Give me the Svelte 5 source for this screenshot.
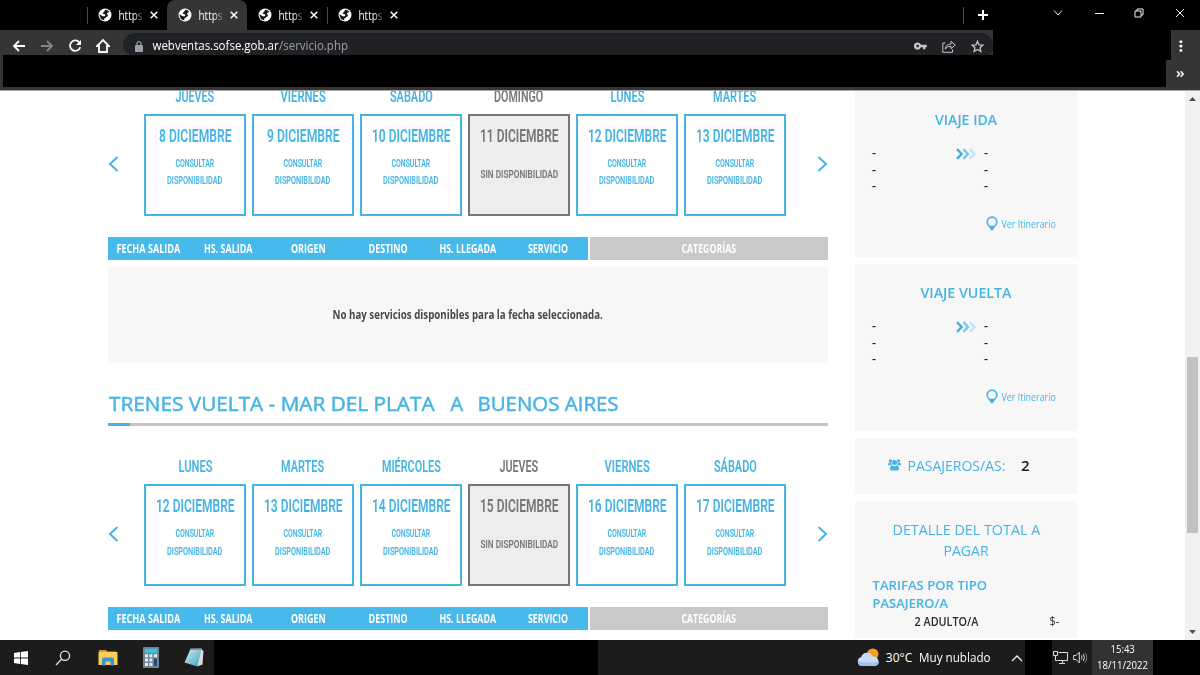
<script lang="ts">
  type Day = { name: string; date: string; nameW: number; dateW: number; off?: boolean };

  const idaDays: Day[] = [
    { name: "JUEVES", date: "8 DICIEMBRE", nameW: 39, dateW: 73 },
    { name: "VIERNES", date: "9 DICIEMBRE", nameW: 45, dateW: 73 },
    { name: "SÁBADO", date: "10 DICIEMBRE", nameW: 43, dateW: 79 },
    { name: "DOMINGO", date: "11 DICIEMBRE", nameW: 49, dateW: 79, off: true },
    { name: "LUNES", date: "12 DICIEMBRE", nameW: 34, dateW: 79 },
    { name: "MARTES", date: "13 DICIEMBRE", nameW: 43, dateW: 79 },
  ];
  const vueltaDays: Day[] = [
    { name: "LUNES", date: "12 DICIEMBRE", nameW: 34, dateW: 79 },
    { name: "MARTES", date: "13 DICIEMBRE", nameW: 43, dateW: 79 },
    { name: "MIÉRCOLES", date: "14 DICIEMBRE", nameW: 59, dateW: 79 },
    { name: "JUEVES", date: "15 DICIEMBRE", nameW: 39, dateW: 79, off: true },
    { name: "VIERNES", date: "16 DICIEMBRE", nameW: 45, dateW: 79 },
    { name: "SÁBADO", date: "17 DICIEMBRE", nameW: 43, dateW: 79 },
  ];
  const columns = [
    { text: "FECHA SALIDA", w: 64 },
    { text: "HS. SALIDA", w: 48 },
    { text: "ORIGEN", w: 35 },
    { text: "DESTINO", w: 39 },
    { text: "HS. LLEGADA", w: 57 },
    { text: "SERVICIO", w: 40 },
  ];
  const tabs = [0, 1, 2, 3];

  function fit(node: HTMLElement, width: number) {
    node.style.transform = `scaleX(${width / node.offsetWidth})`;
  }
</script>

{#snippet label(text: string, width: number)}
  <span class="label" style="width: {width}px"><span class="label-text" use:fit={width}>{text}</span></span>
{/snippet}

{#snippet dates(days: Day[])}
  <div class="dates">
    <svg class="arrow" width="12" height="18" viewBox="0 0 12 18"><path d="M9.5 2 L2 9 L9.5 16" /></svg>
    <div class="days">
      {#each days as day}
        <div class="day" class:off={day.off}>
          <div class="day-name">{@render label(day.name, day.nameW)}</div>
          <div class="card">
            <div class="card-date">{@render label(day.date, day.dateW)}</div>
            {#if day.off}
              <div class="none">{@render label("SIN DISPONIBILIDAD", 78)}</div>
            {:else}
              <div class="ask">{@render label("CONSULTAR", 39)}</div>
              <div class="ask">{@render label("DISPONIBILIDAD", 55)}</div>
            {/if}
          </div>
        </div>
      {/each}
    </div>
    <svg class="arrow" width="12" height="18" viewBox="0 0 12 18"><path d="M2.5 2 L10 9 L2.5 16" /></svg>
  </div>
{/snippet}

{#snippet tableHead()}
  <div class="thead">
    <div class="cols">
      {#each columns as col}
        <div>{@render label(col.text, col.w)}</div>
      {/each}
    </div>
    <div class="cats">{@render label("CATEGORÍAS", 55)}</div>
  </div>
{/snippet}

{#snippet trip(title: string, width: number)}
  <section class="box trip">
    <h3>{@render label(title, width)}</h3>
    <div class="legs">
      <div class="leg"><span>-</span><span>-</span><span>-</span></div>
      <svg width="20" height="12" viewBox="0 0 20 12" fill="none" stroke-width="2.4">
        <path d="M1 1.2 L5.6 6 L1 10.8" stroke="#42afe3" />
        <path d="M7.4 1.2 L12 6 L7.4 10.8" stroke="#79c9ee" />
        <path d="M13.8 1.2 L18.4 6 L13.8 10.8" stroke="#bfe5f7" />
      </svg>
      <div class="leg"><span>-</span><span>-</span><span>-</span></div>
    </div>
    <div class="itinerary">
      <svg width="12" height="15" viewBox="0 0 12 15">
        <path fill="#45b4e4" fill-rule="evenodd" d="M6 0.3 A5.6 5.6 0 0 1 11.6 5.9 C11.6 9 8.5 10.8 7.2 13.6 Q6 15.4 4.8 13.6 C3.5 10.8 0.4 9 0.4 5.9 A5.6 5.6 0 0 1 6 0.3 Z M6 2 A3.9 3.9 0 1 0 6 9.8 A3.9 3.9 0 1 0 6 2 Z" />
      </svg>
      {@render label("Ver Itinerario", 54)}
    </div>
  </section>
{/snippet}

<div class="screen">
  <header class="browser">
    <div class="tabs">
      {#each tabs as tab}
        <div class="tab" class:active={tab === 1} class:line={tab === 0 || tab === 3}>
          <svg width="14" height="14" viewBox="0 0 14 14">
            <circle cx="7" cy="7" r="6.5" fill="#fff" />
            <path fill="#17181a" d="M7.6 1.7 C6.2 2.4 6.8 3.6 5.6 4.3 C4.4 5 4.5 5.8 5.7 6 C7.2 6.1 7.6 6.7 7.2 7.7 L6.8 8.2 H4.7 L1.6 6.2 A5.3 5.3 0 0 0 6.2 12.2 V11 C6.2 10.2 7.3 10.3 7.8 9.6 C8.4 8.8 9.8 8.8 10 7.8 C10.2 6.8 9.2 6.8 9 5.9 C8.8 5 10 5.1 10.5 4.2 L11 3.5 A5.3 5.3 0 0 0 7.6 1.7 Z" />
          </svg>
          <span class="tab-title">{@render label("https", 24)}</span>
          <svg class="close" width="8" height="8" viewBox="0 0 8 8"><path d="M0.7 0.7 L7.3 7.3 M7.3 0.7 L0.7 7.3" /></svg>
        </div>
      {/each}
      <div class="new-tab">
        <svg width="12" height="12" viewBox="0 0 12 12"><path d="M6 1 V11 M1 6 H11" stroke="#fff" stroke-width="2" /></svg>
      </div>
      <div class="window-buttons">
        <svg width="10" height="10" viewBox="0 0 10 10"><path d="M1 2.5 L5 7 L9 2.5" /></svg>
        <svg width="10" height="10" viewBox="0 0 10 10"><path d="M1 5.5 H10" /></svg>
        <svg width="10" height="10" viewBox="0 0 10 10"><path d="M1 3 H7 V9 H1 Z M3 3 V1 H9 V7 H7" /></svg>
        <svg width="10" height="10" viewBox="0 0 10 10"><path d="M1 1 L9 9 M9 1 L1 9" /></svg>
      </div>
    </div>
    <div class="toolbar">
      <div class="nav">
        <svg width="14" height="14" viewBox="0 0 14 14"><path d="M13 7 H2 M7 2 L2 7 L7 12" /></svg>
        <svg class="dim" width="14" height="14" viewBox="0 0 14 14"><path d="M1 7 H12 M7 2 L12 7 L7 12" /></svg>
        <svg width="14" height="14" viewBox="0 0 14 14"><path d="M11.6 3.8 A5.2 5.2 0 1 0 12.2 8.2" /><path d="M13 1 V6 H8 Z" fill="#fff" stroke="none" /></svg>
        <svg width="14" height="16" viewBox="0 0 14 16"><path d="M3 14 V8 H1 L7 2 L13 8 H11 V14 Z" /></svg>
      </div>
      <div class="address">
        <svg width="8" height="11" viewBox="0 0 8 11"><rect y="4" width="8" height="7" rx="1" fill="#9aa0a6" /><path d="M2 4 V2.6 A2 2 0 0 1 6 2.6 V4" fill="none" stroke="#9aa0a6" stroke-width="1.2" /></svg>
        <span class="url">{@render label("webventas.sofse.gob.ar", 126)}<span class="path">{@render label("/servicio.php", 69)}</span></span>
        <div class="actions">
          <svg width="13" height="8" viewBox="0 0 13 8"><path fill="#c4c7cb" fill-rule="evenodd" d="M3.6 0.4 A3.6 3.6 0 1 0 6.9 5.3 H9 V7.3 H11.4 V5.3 H12.7 V2.7 H6.9 A3.6 3.6 0 0 0 3.6 0.4 Z M3.6 2.7 A1.3 1.3 0 1 1 3.6 5.3 A1.3 1.3 0 1 1 3.6 2.7 Z" /></svg>
          <svg width="14" height="13" viewBox="0 0 14 13"><path fill="none" stroke="#c4c7cb" d="M3.5 3 H0.8 V12.3 H10.5 V9.5 M3.2 9 Q4 4 9 4 V1.2 L13.2 5 L9 8.6 V6.2 Q5.5 6 3.2 9 Z" /></svg>
          <svg width="13" height="13" viewBox="0 0 13 13"><path fill="none" stroke="#c4c7cb" stroke-width="1.3" d="M6.5 1.2 L8 4.8 L12 5.1 L9 7.7 L9.9 11.5 L6.5 9.5 L3.1 11.5 L4 7.7 L1 5.1 L5 4.8 Z" /></svg>
        </div>
      </div>
      <div class="menu">
        <svg width="4" height="14" viewBox="0 0 4 14" fill="#fff"><rect x="0.5" y="1.4" width="2.8" height="2.6" rx="0.8" /><rect x="0.5" y="5.8" width="2.8" height="2.6" rx="0.8" /><rect x="0.5" y="10.2" width="2.8" height="2.6" rx="0.8" /></svg>
      </div>
    </div>
    <div class="bookmarks">
      <div class="more">
        <svg width="8" height="8" viewBox="0 0 8 8"><path d="M1 1.2 L3.6 4 L1 6.8 M4.6 1.2 L7.2 4 L4.6 6.8" fill="none" stroke="#fff" stroke-width="1.5" /></svg>
      </div>
    </div>
  </header>

  <div class="page">
    <main>
      <div class="first">{@render dates(idaDays)}</div>
      {@render tableHead()}
      <div class="empty">{@render label("No hay servicios disponibles para la fecha seleccionada.", 270)}</div>
      <h2>
        {@render label("TRENES VUELTA - MAR DEL PLATA", 326)}
        {@render label("A", 13)}
        {@render label("BUENOS AIRES", 141)}
      </h2>
      <div class="rule"><div></div></div>
      {@render dates(vueltaDays)}
      {@render tableHead()}
    </main>

    <aside>
      {@render trip("VIAJE IDA", 62)}
      {@render trip("VIAJE VUELTA", 91)}
      <section class="box passengers">
        <svg width="13" height="12" viewBox="0 0 13 12" fill="#45b4e4">
          <circle cx="2.5" cy="2" r="1.7" /><circle cx="10.5" cy="2" r="1.7" /><circle cx="6.5" cy="3.6" r="2.5" />
          <path d="M0 6.2 V5.4 Q0 4 1.2 4 H3.3 Q3.4 5.4 4.2 6.2 Z M13 6.2 V5.4 Q13 4 11.8 4 H9.7 Q9.6 5.4 8.8 6.2 Z M2 9.8 Q2 6.6 4.2 6.4 Q6.5 8 8.8 6.4 Q11 6.6 11 9.8 Q11 11.6 9.4 11.6 H3.6 Q2 11.6 2 9.8 Z" />
        </svg>
        {@render label("PASAJEROS/AS:", 98)}
        <b>2</b>
      </section>
      <section class="box total">
        <h4>{@render label("DETALLE DEL TOTAL A", 148)}<br />{@render label("PAGAR", 45)}</h4>
        <h5>{@render label("TARIFAS POR TIPO", 115)}<br />{@render label("PASAJERO/A", 76)}</h5>
        <div class="fare">
          {@render label("2 ADULTO/A", 64)}
          <span class="price">{@render label("$-", 10)}</span>
        </div>
      </section>
    </aside>

    <div class="scrollbar">
      <svg width="7" height="4" viewBox="0 0 7 4"><path d="M0 4 L3.5 0 L7 4 Z" fill="#505050" /></svg>
      <div class="thumb"></div>
      <svg width="7" height="4" viewBox="0 0 7 4"><path d="M0 0 L3.5 4 L7 0 Z" fill="#505050" /></svg>
    </div>
  </div>

  <footer class="taskbar">
    <div class="apps">
      <svg width="14" height="14" viewBox="0 0 14 14" fill="#fff"><path d="M0 2 L6 1.1 V6.6 H0 Z M6.8 1 L14 0 V6.6 H6.8 Z M0 7.4 H6 V12.9 L0 12 Z M6.8 7.4 H14 V14 L6.8 13 Z" /></svg>
      <svg width="16" height="16" viewBox="0 0 16 16" fill="none" stroke="#e4e4e4" stroke-width="1.3"><circle cx="10" cy="5.7" r="4.6" /><path d="M6.6 9.2 L1 15" /></svg>
      <svg width="20" height="17" viewBox="0 0 20 17">
        <path d="M1 1 H8 L9.5 2.5 H18 V6 H1 Z" fill="#e8961e" /><rect x="0.5" y="3" width="19" height="13" rx="0.6" fill="#fbcf55" />
        <path d="M4 16.5 V10 Q4 8.5 5.5 8.5 H14.5 Q16 8.5 16 10 V16.5 H12.5 V12.5 H7.5 V16.5 Z" fill="#3b93d8" />
      </svg>
      <svg width="16" height="21" viewBox="0 0 16 21">
        <rect width="16" height="21" rx="0.8" fill="#748493" /><rect x="2" y="1.8" width="12" height="4" fill="#32c6ee" />
        <path d="M2 7.3 H5 V10.3 H2 Z M6.4 7.3 H9.4 V10.3 H6.4 Z M10.9 7.3 H14 V10.3 H10.9 Z M2 11.6 H5 V14.6 H2 Z M6.4 11.6 H9.4 V14.6 H6.4 Z M2 16 H5 V19 H2 Z M6.4 16 H9.4 V19 H6.4 Z" fill="#e2eaf0" />
        <rect x="10.9" y="11.6" width="3.1" height="7.4" fill="#174f87" />
      </svg>
      <svg width="20" height="19" viewBox="0 0 20 19">
        <defs><linearGradient id="note" x1="0" y1="0" x2="1" y2="1"><stop offset="0" stop-color="#d8f1f6" /><stop offset="1" stop-color="#3c9fba" /></linearGradient></defs>
        <path d="M17 1 L19.5 3 L18.5 16.5 L13 18.5 Z" fill="#e0ddd7" /><path d="M6.5 1 L17.5 0.5 L13.5 18.5 L0.5 14.5 Z" fill="url(#note)" /><path d="M6 1.2 H17.5" stroke="#8a9598" stroke-width="1.5" />
      </svg>
    </div>
    <div class="weather">
      <svg width="23" height="19" viewBox="0 0 23 19">
        <circle cx="15.7" cy="6.2" r="5.8" fill="#f4a024" />
        <path d="M5 18 A4.6 4.6 0 0 1 4.2 9 A6 6 0 0 1 15.6 8.6 A4.7 4.7 0 1 1 17.5 18 Z" fill="#c9dcfa" />
        <path d="M5 18 A4.6 4.6 0 0 1 0.8 13.4 Q11 16 22.2 13.4 A4.7 4.7 0 0 1 17.5 18 Z" fill="#9fbff0" />
      </svg>
      {@render label("30°C", 26)}
      {@render label("Muy nublado", 72)}
      <svg width="12" height="8" viewBox="0 0 12 8" fill="none" stroke="#eee" stroke-width="1.3"><path d="M1 7 L6 2 L11 7" /></svg>
    </div>
    <div class="tray">
      <svg width="15" height="13" viewBox="0 0 15 13" fill="none" stroke="#ddd"><path d="M5.5 1.5 H14.5 V9.5 H4.5 M6 12.5 H12 M9.5 9.5 V12.5 M0.5 0.5 H4.5 V4.5 H0.5 Z M2.5 4.5 V9.5 H4.5" /></svg>
      <svg width="15" height="13" viewBox="0 0 15 13" fill="none" stroke="#ddd"><path d="M0.6 4.5 H3 L6.3 1.2 V11.8 L3 8.5 H0.6 Z M8.4 4.5 Q9.8 6.5 8.4 8.5 M10.3 3 Q12.6 6.5 10.3 10" /><path d="M12.2 1.5 Q15.4 6.5 12.2 11.5" stroke="#777" /></svg>
    </div>
    <div class="clock">
      {@render label("15:43", 24)}
      {@render label("18/11/2022", 51)}
    </div>
  </footer>
</div>

<style>
  :global(body) {
    background: #000;
    overflow: hidden;
  }
  .screen {
    width: 1200px;
    height: 675px;
    display: grid;
    grid-template-rows: 91px 549px 35px;
    background: #000;
    font-family: "Open Sans", "Noto Sans", sans-serif;
  }
  svg {
    display: block;
    flex: none;
  }
  h2, h3, h4, h5 {
    margin: 0;
    font-weight: inherit;
  }
  .label {
    display: inline-flex;
    justify-content: center;
    flex: none;
    vertical-align: top;
  }
  .label-text {
    flex: none;
    white-space: nowrap;
  }

  /* browser chrome */
  .browser {
    display: grid;
    grid-template-rows: 30px 25px 32px 3px;
    box-sizing: border-box;
    background: #353535;
    border-bottom: 1px solid #a9a9a9;
    color: #fff;
  }
  .tabs {
    display: flex;
    padding-left: 87px;
    background: #000;
  }
  .tab {
    display: flex;
    align-items: center;
    width: 80px;
    box-sizing: border-box;
    padding-left: 11px;
    font-size: 12px;
  }
  .tab.line {
    background: linear-gradient(#4a4a4a, #4a4a4a) 0 7px / 1px 17px no-repeat;
  }
  .tab.active {
    background: #353535;
    border-radius: 8px 8px 0 0;
  }
  .tab-title {
    width: 24px;
    margin: 0 7px 0 6.5px;
    mask-image: linear-gradient(90deg, #000 60%, rgba(0, 0, 0, 0.2) 100%);
  }
  .close {
    fill: none;
    stroke: #fff;
    stroke-width: 1.5;
  }
  .new-tab {
    display: flex;
    align-items: center;
    margin-left: 556px;
    padding-left: 14px;
    width: 60px;
    background: linear-gradient(#4a4a4a, #4a4a4a) 0 7px / 1px 17px no-repeat;
  }
  .window-buttons {
    display: flex;
    align-items: center;
    gap: 30.5px;
    margin-left: 16px;
    height: 25px;
    fill: none;
    stroke: #eee;
  }
  .toolbar {
    display: grid;
    grid-template-columns: 123px 870px 178px 29px;
    background: linear-gradient(#000, #000) 993px 0 / 178px 25px no-repeat;
  }
  .nav {
    display: flex;
    gap: 14px;
    padding: 1px 0 0 12px;
    align-items: center;
    height: 30px;
    fill: none;
    stroke: #fff;
    stroke-width: 1.8;
  }
  .dim {
    stroke: #858585;
  }
  .address {
    display: flex;
    align-items: center;
    box-sizing: border-box;
    height: 22px;
    margin-top: 3px;
    padding: 4px 9px 0 12px;
    background: #202124;
    border-radius: 14px 14px 8px 12px;
    font-size: 12.5px;
    line-height: 18px;
  }
  .url {
    display: flex;
    margin-left: 10px;
  }
  .path {
    color: #9aa0a6;
  }
  .actions {
    display: flex;
    align-items: center;
    gap: 15px;
    margin-left: auto;
  }
  .menu {
    grid-column: 4;
    display: flex;
    justify-content: center;
    align-items: flex-start;
    padding: 9px 9px 0 0;
  }
  .bookmarks {
    display: flex;
    justify-content: flex-end;
    margin-left: 3px;
    background: linear-gradient(#353535, #353535) right top / 29px 5px no-repeat #000;
  }
  .more {
    display: flex;
    align-items: center;
    justify-content: center;
    box-sizing: border-box;
    width: 34px;
    height: 27px;
    margin-top: 5px;
    padding-right: 7px;
    background: #353535;
  }

  /* page */
  .page {
    display: grid;
    grid-template-columns: 108px 720px 27px 222px 108px 15px;
    background: #fff;
    color: #45b4e4;
    overflow: hidden;
  }
  main {
    grid-column: 2;
  }
  .first {
    margin-top: -6px;
  }
  .dates {
    display: flex;
  }
  .arrow {
    margin-top: 70px;
    fill: none;
    stroke: #45b4e4;
    stroke-width: 2;
  }
  .days {
    display: flex;
    gap: 6px;
    margin: 0 30px 0 24px;
  }
  .day {
    width: 102px;
    text-align: center;
    font-family: Roboto, sans-serif;
    font-weight: 600;
  }
  .day.off {
    color: #767676;
  }
  .day-name {
    height: 29px;
    font-size: 16px;
    line-height: 23px;
  }
  .card {
    box-sizing: border-box;
    height: 102px;
    border: 2px solid #45b4e4;
    padding-top: 9px;
  }
  .off .card {
    border-color: #767676;
    background: #eeecee;
  }
  .card-date {
    font-size: 17.5px;
    line-height: 22px;
    height: 30px;
  }
  .ask {
    font-size: 11px;
    line-height: 17.5px;
    height: 17.2px;
  }
  .none {
    padding-top: 10px;
    font-size: 11.5px;
    line-height: 18px;
  }
  .thead {
    display: flex;
    gap: 2px;
    margin-top: 21px;
    height: 23px;
    color: #fff;
    font-size: 11.5px;
    font-weight: 700;
    line-height: 23px;
    text-align: center;
  }
  .cols {
    display: grid;
    grid-template-columns: repeat(6, 80px);
    background: #48b9eb;
  }
  .cats {
    flex: 1;
    background: #c9c9c9;
  }
  .empty {
    height: 96px;
    margin-top: 7px;
    background: #f7f7f7;
    color: #484848;
    font-size: 12px;
    font-weight: 700;
    line-height: 95px;
    text-align: center;
  }
  h2 {
    display: flex;
    gap: 15px;
    margin-top: 27px;
    height: 33px;
    padding-left: 1px;
    font-size: 20px;
    line-height: 28px;
    -webkit-text-stroke: 0.45px #45b4e4;
  }
  .rule {
    height: 3px;
    margin-bottom: 29.4px;
    background: #c6c6c6;
  }
  .rule div {
    width: 22px;
    height: 3px;
    background: #45b4e4;
  }

  /* side column */
  aside {
    grid-column: 4;
    display: flex;
    flex-direction: column;
    gap: 7px;
  }
  .box {
    background: #f7f7f7;
    box-sizing: border-box;
    flex: none;
  }
  .trip {
    height: 166.4px;
    padding-top: 17.5px;
  }
  h3 {
    font-size: 15px;
    font-weight: 600;
    line-height: 20px;
    text-align: center;
  }
  .legs {
    display: flex;
    margin: 16.5px 0 0 17px;
    color: #222;
    font-size: 12px;
    font-weight: 600;
    line-height: 16.5px;
  }
  .legs svg {
    margin: 2.5px 8px 0 0;
  }
  .leg {
    display: flex;
    flex-direction: column;
    width: 84px;
  }
  .itinerary {
    display: flex;
    align-items: center;
    gap: 4px;
    margin: 21px 0 0 131px;
    font-size: 11px;
    line-height: 15px;
  }
  .passengers {
    display: flex;
    align-items: center;
    height: 56px;
    padding: 0 0 1px 33px;
    gap: 6px;
    font-size: 15px;
  }
  .passengers b {
    margin-left: 10px;
    color: #222;
    font-weight: 600;
  }
  .total {
    height: 137px;
    padding: 18.5px 17px 0;
  }
  h4 {
    font-size: 15px;
    line-height: 21px;
    text-align: center;
  }
  h5 {
    margin-top: 15px;
    font-size: 13px;
    font-weight: 600;
    line-height: 18.2px;
  }
  .fare {
    display: flex;
    justify-content: space-between;
    padding-left: 42px;
    color: #2b2b2b;
    font-size: 12px;
    font-weight: 600;
    line-height: 18px;
  }
  .price {
    margin-right: 1px;
    font-weight: 400;
  }
  .scrollbar {
    grid-column: 6;
    display: flex;
    flex-direction: column;
    align-items: center;
    box-sizing: border-box;
    padding: 6px 0 6px;
    background: #f1f1f1;
  }
  .thumb {
    width: 11px;
    height: 176px;
    margin: 256px 0 auto;
    background: #c1c1c1;
  }

  /* taskbar */
  .taskbar {
    display: grid;
    grid-template-columns: 214px 384px 427px 27px 40px 61px;
    color: #fff;
    font-size: 12px;
  }
  .apps, .weather, .tray {
    display: flex;
    align-items: center;
    background: #1c1c1c;
  }
  .apps {
    padding-left: 14px;
    gap: 27px;
  }
  .apps svg:nth-child(n + 4) {
    margin-left: -2px;
  }
  .weather {
    grid-column: 3;
    padding-left: 258.5px;
    gap: 6.5px;
  }
  .weather svg:last-child {
    margin-left: 14px;
  }
  .tray {
    grid-column: 5;
    box-sizing: border-box;
    padding-left: 1px;
    gap: 5px;
  }
  .clock {
    grid-column: 6;
    display: flex;
    flex-direction: column;
    align-items: center;
    justify-content: center;
    box-sizing: border-box;
    padding-bottom: 1px;
    background: #323232;
    font-size: 11.5px;
    line-height: 16px;
  }
</style>
